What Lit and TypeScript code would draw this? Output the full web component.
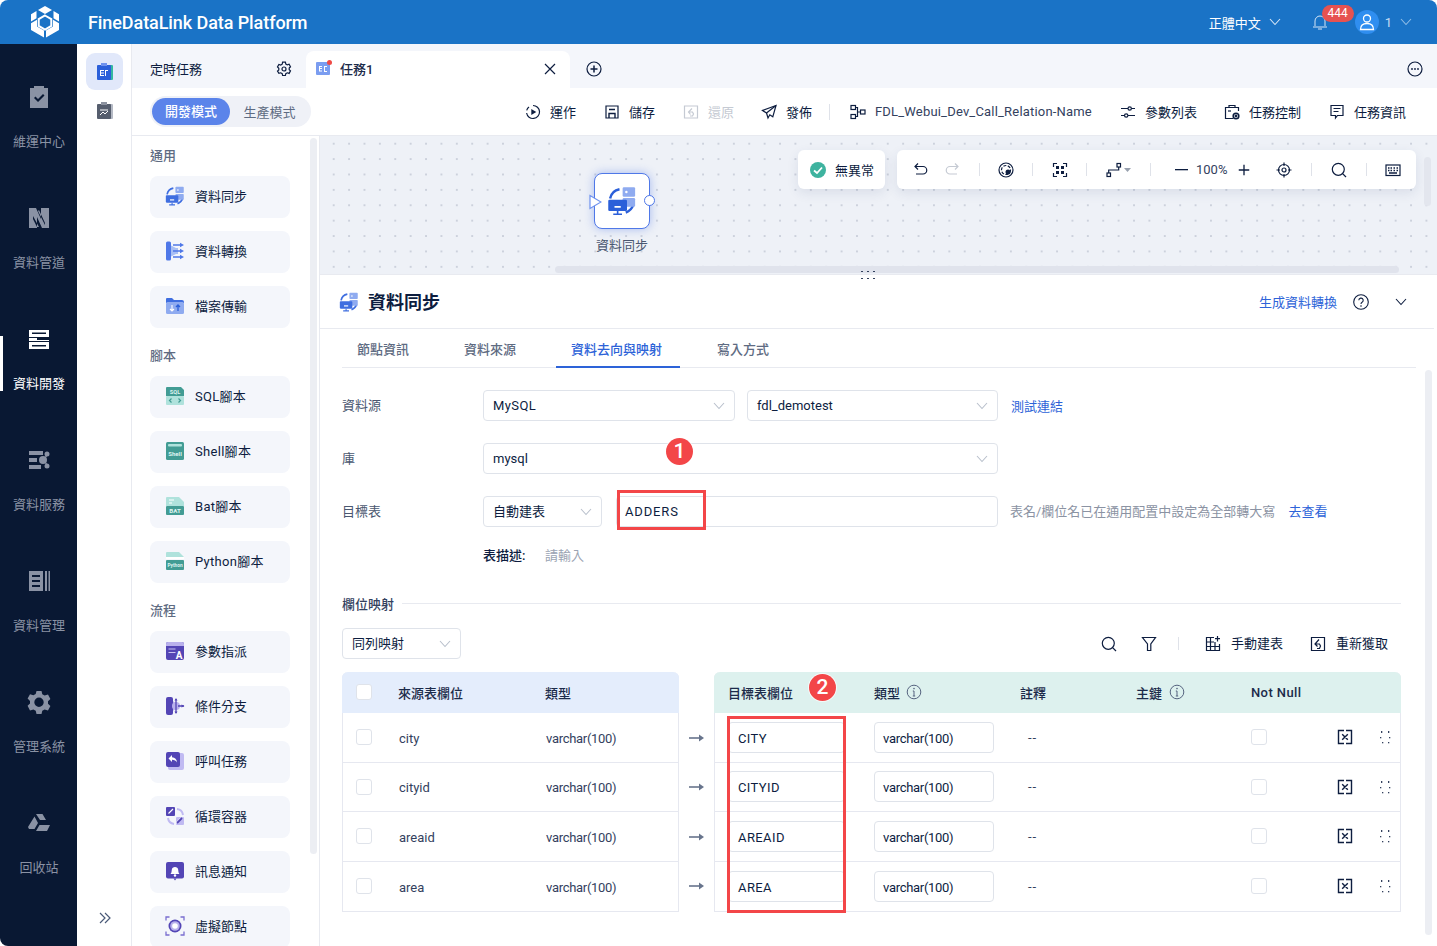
import { LitElement, html, css, svg } from 'lit';
import { customElement } from 'lit/decorators.js';

const ink = '#0d1d3f';

// small line icon wrapper, 16 box by default
const line = (body: unknown, size = 16, color = ink, sw = 1.2) => html`<svg
  width=${size} height=${size} viewBox="0 0 16 16" fill="none" stroke=${color} stroke-width=${sw}>${body}</svg>`;

const chevron = (color = '#b9c0cc') => html`<svg class="chev" width="12" height="8" viewBox="0 0 12 8" fill="none" stroke=${color} stroke-width="1.1"><path d="M1 1l5 5.5L11 1"/></svg>`;

const syncIcon = (size = 24, dark = '#2b5fd9', light = '#8fabf0') => html`<svg width=${size} height=${size} viewBox="0 0 24 24" fill="none">
  <path d="M2.5 10A9.5 9.5 0 0 1 10 2.6" stroke=${dark} stroke-width="2"/>
  <path d="M21 15a9.5 9.5 0 0 1-6 6.2" stroke=${dark} stroke-width="2"/>
  <rect x="12.5" y="1" width="10" height="7.5" rx="1" fill=${light}/>
  <rect x="12.5" y="9.5" width="10" height="7" rx="1" fill=${light}/>
  <circle cx="15.5" cy="4.8" r="1" fill="#fff"/>
  <rect x="1" y="11" width="15" height="9" rx="1" fill=${dark}/>
  <rect x="6" y="16" width="5" height="1.4" fill="#fff"/>
  <path d="M8.5 20v2.2M5 22.6h7" stroke=${dark} stroke-width="1.3"/>
</svg>`;

const transformIcon = html`<svg width="20" height="20" viewBox="0 0 20 20" fill="none">
  <path d="M6 4.500l5 2.500h2v6h-2l-5 2.500z" fill="#a9bff4"/>
  <rect x="1" y="0.500" width="5" height="19" rx="1.500" fill="#4f78e8"/>
  <path d="M8 4h8M8 10h8M8 16h8" stroke="#4f78e8" stroke-width="1.500"/>
  <path d="M15 1.800l4 2.200-4 2.200zM15 7.800l4 2.200-4 2.200zM15 13.800l4 2.200-4 2.200z" fill="#4f78e8"/>
</svg>`;

const folderIcon = html`<svg width="20" height="20" viewBox="0 0 20 20" fill="none">
  <path d="M1 3a1 1 0 0 1 1-1h5l2 2h8a2 2 0 0 1 2 2v1H1z" fill="#3f6ee0"/>
  <rect x="1" y="6" width="18" height="12" rx="1.500" fill="#8fabf0"/>
  <path d="M7 9v6M5 13l2 2 2-2" stroke="#fff" stroke-width="1.100"/>
  <path d="M13 15V9M11 11l2-2 2 2" stroke="#2b5fd9" stroke-width="1.300"/>
</svg>`;

const scriptIcon = (kind: string) => html`<svg width="20" height="20" viewBox="0 0 20 20" fill="none" font-family="Roboto,sans-serif" font-weight="700">
  ${kind === 'sql' ? svg`<path d="M1 2a1 1 0 0 1 1-1h14l3 3v6H1z" fill="#429c94"/><rect x="1" y="10" width="18" height="9" rx="1" fill="#afe2dc"/>
    <text x="10" y="8" font-size="5.600" fill="#dff4f1" text-anchor="middle">SQL</text>
    <path d="M6.500 12.500l-2 2 2 2M13.500 12.500l2 2-2 2" stroke="#429c94" stroke-width="1.200"/>` : ''}
  ${kind === 'shell' ? svg`<rect x="1" y="1" width="18" height="18" rx="1.500" fill="#429c94"/><rect x="3" y="3" width="14" height="2.500" rx="1" fill="#afe2dc"/>
    <text x="10" y="14.500" font-size="6" fill="#dff4f1" text-anchor="middle">Shell</text>` : ''}
  ${kind === 'bat' ? svg`<path d="M1 2a1 1 0 0 1 1-1h12l5 5v4H1z" fill="#afe2dc"/><path d="M4 4h5M4 7h3" stroke="#fff" stroke-width="1.200"/><rect x="1" y="10" width="18" height="9" rx="1" fill="#429c94"/>
    <text x="10" y="17" font-size="6.200" fill="#dff4f1" text-anchor="middle">BAT</text>` : ''}
  ${kind === 'python' ? svg`<path d="M1 2a1 1 0 0 1 1-1h12l5 5v2H1z" fill="#afe2dc"/><rect x="1" y="6" width="18" height="2" fill="#fff"/><rect x="1" y="9" width="18" height="10" rx="1" fill="#429c94"/>
    <text x="10" y="16" font-size="4.800" fill="#dff4f1" text-anchor="middle">Python</text>` : ''}
</svg>`;

const flowIcon = (kind: string) => html`<svg width="20" height="20" viewBox="0 0 20 20" fill="none">
  ${kind === 'param' ? svg`<rect x="1" y="1" width="18" height="18" rx="2" fill="#5345b5"/><path d="M1 3a2 2 0 0 1 2-2h14a2 2 0 0 1 2 2v2H1z" fill="#b9b1ec"/>
    <path d="M3.500 8h7M3.500 11.500h7" stroke="#c9c3f0" stroke-width="1"/><text x="14" y="18" font-size="10" font-weight="700" font-family="Roboto,sans-serif" fill="#fff" text-anchor="middle">A</text>` : ''}
  ${kind === 'branch' ? svg`<rect x="1" y="1" width="7" height="18" rx="2" fill="#5345b5"/><path d="M8 5l5 5-5 5z" fill="#b9b1ec"/><circle cx="11" cy="10" r="4" fill="#b9b1ec"/>
    <path d="M2 10h5M13 10h6M11 3v14" stroke="#5345b5" stroke-width="1.300"/><path d="M9.500 4.500L11 2l1.500 2.500zM9.500 15.500L11 18l1.500-2.500zM16.500 8.500L19.500 10l-3 1.500z" fill="#5345b5"/>` : ''}
  ${kind === 'call' ? svg`<rect x="3" y="2" width="16" height="17" rx="2" fill="#c0baf2"/><rect x="1" y="1" width="14" height="15" rx="2" fill="#5345b5"/>
    <path d="M7 4L3.500 7.500 7 11V8.800c2.500 0 4 .8 5 2.700-.2-3.300-2-5-5-5.300z" fill="#fff"/>` : ''}
  ${kind === 'loop' ? svg`<rect x="1" y="1" width="9" height="9" rx="1" fill="#5345b5"/><rect x="11" y="11" width="8" height="8" rx="1" fill="#c0baf2"/>
    <path d="M12 3a7 7 0 0 1 6 6M3 12a7 7 0 0 0 6 6" stroke="#c0baf2" stroke-width="2"/><path d="M8 3L3.500 7.500M11 17l5-5" stroke="#fff" stroke-width="1.200"/><path d="M12 17l5-5" stroke="#5345b5" stroke-width="1.800"/>` : ''}
  ${kind === 'notify' ? svg`<rect x="1" y="1" width="18" height="16.500" rx="2" fill="#5345b5"/><path d="M8.500 17.500h3L10 19.500z" fill="#5345b5"/>
    <path d="M5.500 13c1.300-1 1-2.500 1.300-4.200C7 7 8.300 6 10 6s3 1 3.200 2.800c.3 1.700 0 3.200 1.300 4.200z" fill="#fff"/><circle cx="10" cy="14.500" r="1.200" fill="#fff"/>` : ''}
  ${kind === 'virtual' ? svg`<circle cx="10" cy="10" r="6.500" fill="#5345b5"/><circle cx="10" cy="10" r="4.800" fill="#b9b1ec"/><circle cx="10" cy="10" r="2.800" fill="#fff"/>
    <path d="M1 4.500V1h3.500M15.500 1H19v3.500M19 15.500V19h-3.500M4.500 19H1v-3.500" stroke="#7a6ed0" stroke-width="1.300"/>` : ''}
</svg>`;

const railIcon = (i: number, c: string) => html`<svg width="24" height="24" viewBox="0 0 24 24" fill=${c}>
  ${[
    svg`<path fill-rule="evenodd" d="M3 4h4V2h10v2h4v20H3zM7 14l1.500-1.500L11 15l5-5 1.500 1.500L11 18z" transform="translate(0 -1)"/>`,
    svg`<path fill-rule="evenodd" d="M2 2h7l5 11V2h8v20h-7L10 11v11H2zM11 5l7 14v-2l-6-13zM6 10l6 11h-2L6 13z"/>`,
    svg`<path d="M2 3h20v7H2zM2 11h8v2h12v1H2zM2 15h20v7H2z"/><rect x="5" y="5.500" width="14" height="1.500" fill="#091833"/><rect x="5" y="18" width="14" height="1.500" fill="#091833"/>`,
    svg`<path d="M2 3h14v4H2zM2 10h8v4H2zM2 17h12v4H2z"/><circle cx="16" cy="12" r="4"/><circle cx="20" cy="6" r="2.500"/><circle cx="20" cy="18" r="2.500"/><path d="M16 12l4-6 1 1-4 5 4 5-1 1z"/>`,
    svg`<path fill-rule="evenodd" d="M2 2h14v20H2zM5 6v2h8V6zM5 11v2h8v-2zM5 16v2h8v-2z"/><rect x="18" y="2" width="2" height="20"/><rect x="21.500" y="2" width="1.500" height="20"/>`,
    svg`<path fill-rule="evenodd" d="M9.500 1h5l.8 3.200 2.300 1.300L21 4.600l2.400 4.300-2.400 2.300v2.600l2.400 2.300-2.400 4.300-3.400-.9-2.300 1.300-.8 3.200h-5l-.8-3.200-2.300-1.300-3.400.9L.6 15.800 3 13.500v-2.600L.6 8.600 3 4.300l3.400.9 2.300-1.300zM12 7.500a4.700 4.700 0 1 0 0 9.400 4.700 4.700 0 0 0 0-9.400z"/>`,
    svg`<path d="M9 3h6.500l3.500 6-6 0zM7.500 5.500L11 12l-3.500 6H2l-1-2zM9 20l3.500-6H23l-3 6z"/>`,
  ][i]}
</svg>`;

const toolIcons: Record<string, unknown> = {
  run: line(svg`<path d="M8 1.500a6.500 6.500 0 1 1-6.400 7.500M1.700 6.300A6.500 6.500 0 0 1 4 3"/><path d="M6.300 5l5 3-5 3z" fill="${ink}" stroke="none"/>`),
  save: line(svg`<path d="M2 2h12v12H2z"/><path d="M5 14V9.500h6V14M5 5.500h6" stroke-width="1.400"/>`),
  revert: line(svg`<path d="M1.500 2h13v12h-13z"/><path d="M9 4.500L5.500 8l2 2.500M5.500 8h4l1 2-1 2H7"/>`, 16, '#c5cad3'),
  publish: line(svg`<path d="M15 1.500L1.500 6.500l4 2.500 1.500 5 1.800-3.200 3 2z"/><path d="M5.500 9L15 1.500"/>`),
  relation: line(svg`<rect x="1" y="1.500" width="4.500" height="4"/><rect x="1" y="10.500" width="4.500" height="4"/><rect x="10.500" y="6" width="4.500" height="4"/><path d="M5.500 3.500h2v9h-2M7.500 8h3"/>`),
  params: line(svg`<path d="M1 4.500h7M11.500 4.500H15M1 11.500h3.500M8 11.500h7"/><circle cx="9.700" cy="4.500" r="1.700"/><circle cx="6.200" cy="11.500" r="1.700"/>`),
  control: line(svg`<path d="M9 14.500H1.500v-11h13V7M5 3.500V1.500h6v2"/><path d="M4 7h3"/><circle cx="12" cy="12" r="2.800" stroke-width="1.600"/><circle cx="12" cy="12" r=".8" fill="${ink}"/>`),
  info: line(svg`<path d="M2 1.500h12v10H8.500L6.500 14v-2.500H2z"/><path d="M4.500 4.500h7M4.500 7.500h5"/>`),
};

const gearIcon = line(svg`<path d="M6.600 1.200h2.800l.4 1.800 1.500.9 1.800-.6 1.400 2.500-1.300 1.200v1.700l1.300 1.200-1.400 2.500-1.800-.6-1.500.9-.4 1.800H6.600l-.4-1.800-1.500-.9-1.800.6L1.500 10.100l1.300-1.200V7.200L1.500 6l1.400-2.500 1.800.6 1.500-.9z"/><circle cx="8" cy="8" r="2"/>`);

type Card = { name: string; icon: unknown };
const groups: { title: string; cards: Card[] }[] = [
  { title: '通用', cards: [
    { name: '資料同步', icon: syncIcon(20, '#3f6ee0') },
    { name: '資料轉換', icon: transformIcon },
    { name: '檔案傳輸', icon: folderIcon },
  ] },
  { title: '腳本', cards: [
    { name: 'SQL腳本', icon: scriptIcon('sql') },
    { name: 'Shell腳本', icon: scriptIcon('shell') },
    { name: 'Bat腳本', icon: scriptIcon('bat') },
    { name: 'Python腳本', icon: scriptIcon('python') },
  ] },
  { title: '流程', cards: [
    { name: '參數指派', icon: flowIcon('param') },
    { name: '條件分支', icon: flowIcon('branch') },
    { name: '呼叫任務', icon: flowIcon('call') },
    { name: '循環容器', icon: flowIcon('loop') },
    { name: '訊息通知', icon: flowIcon('notify') },
    { name: '虛擬節點', icon: flowIcon('virtual') },
  ] },
];

const railItems = ['維運中心', '資料管道', '資料開發', '資料服務', '資料管理', '管理系統', '回收站'];

const tools = [
  { key: 'run', label: '運作' },
  { key: 'save', label: '儲存' },
  { key: 'revert', label: '還原', off: true },
  { key: 'publish', label: '發佈', sep: true },
  { key: 'relation', label: 'FDL_Webui_Dev_Call_Relation-Name' },
  { key: 'params', label: '參數列表' },
  { key: 'control', label: '任務控制' },
  { key: 'info', label: '任務資訊' },
];

const fields = [
  { src: 'city', target: 'CITY' },
  { src: 'cityid', target: 'CITYID' },
  { src: 'areaid', target: 'AREAID' },
  { src: 'area', target: 'AREA' },
];

const infoIcon = line(svg`<circle cx="8" cy="8" r="6.800"/><path d="M8 7v5M6.800 7H8M6.800 12h2.400"/><circle cx="8" cy="4.600" r=".8" fill="#566480" stroke="none"/>`, 16, '#566480', 1);

@customElement('app-root')
export class AppRoot extends LitElement {
  static styles = css`
    :host {
      display: block;
      width: 1437px;
      height: 946px;
      font-family: Roboto, "Noto Sans CJK TC", sans-serif;
      font-size: 13px;
      color: #0d1d3f;
    }
    svg { display: block; flex: none; }
    .app {
      position: relative;
      width: 1437px;
      height: 946px;
      display: flex;
      flex-direction: column;
      overflow: hidden;
      border-radius: 8px;
      background: #fff;
    }

    /* top bar */
    .top {
      height: 44px;
      flex: none;
      display: flex;
      align-items: center;
      background: #1a73c6;
      color: #fff;
      padding: 0 25px 0 28px;
    }
    .title { margin-left: 26px; font-size: 18px; font-weight: 500; letter-spacing: -0.08px; }
    .top-right { margin-left: auto; display: flex; align-items: center; }
    .lang { margin-right: 8px; }
    .bell { position: relative; margin-left: 31px; }
    .badge {
      position: absolute;
      left: 10px;
      top: -9px;
      width: 32px;
      height: 17px;
      border-radius: 9px;
      background: #e65251;
      font-size: 12px;
      line-height: 17px;
      text-align: center;
    }
    .avatar {
      width: 24px;
      height: 24px;
      border-radius: 50%;
      background: #2f8ef0;
      margin-left: 27px;
      display: flex;
      align-items: center;
      justify-content: center;
    }
    .uid { margin: 0 8px 0 6px; color: #c6ddf3; }

    .body { flex: 1; display: flex; min-height: 0; }

    /* dark rail */
    .rail { width: 77px; flex: none; box-sizing: border-box; background: #091833; padding: 15px 0 0 1px; }
    .rail-item {
      position: relative;
      height: 121px;
      box-sizing: border-box;
      padding-top: 26px;
      display: flex;
      flex-direction: column;
      align-items: center;
      gap: 23px;
      color: #8a92a4;
      line-height: 20px;
    }
    .rail-item.on { color: #fff; }
    .rail-item.on::before {
      content: "";
      position: absolute;
      left: -1px;
      top: 35px;
      width: 3px;
      height: 55px;
      background: #fff;
    }

    /* narrow second nav */
    .subnav {
      width: 55px;
      flex: none;
      box-sizing: border-box;
      border-right: 1px solid #e8eaf0;
      padding: 9px 0 0 9px;
      display: flex;
      flex-direction: column;
    }
    .sub-btn {
      width: 37px;
      height: 37px;
      border-radius: 9px;
      display: flex;
      align-items: center;
      justify-content: center;
      margin-bottom: 2px;
    }
    .sub-btn.on { background: #e1e8fa; }
    .expand { margin: auto 0 22px 13px; color: #4a5a78; }

    .main { flex: 1; min-width: 0; display: flex; flex-direction: column; }

    /* tabs */
    .tabs {
      height: 44px;
      flex: none;
      background: #f4f6fb;
      display: flex;
      align-items: flex-end;
    }
    .tab-fixed {
      width: 174px;
      height: 37px;
      box-sizing: border-box;
      padding: 0 14px 2px 18px;
      display: flex;
      align-items: center;
      justify-content: space-between;
    }
    .tab {
      width: 264px;
      height: 37px;
      box-sizing: border-box;
      padding: 0 14px 2px 10px;
      display: flex;
      align-items: center;
      background: #fff;
      border-radius: 8px 8px 0 0;
      font-weight: 500;
      color: #1c2b4a;
    }
    .tab-icon { position: relative; margin-right: 9px; }
    .tab-icon i {
      position: absolute;
      right: -1px;
      top: -1px;
      width: 5px;
      height: 5px;
      border-radius: 50%;
      background: #ef4a45;
    }
    .tab .x { margin-left: auto; }
    .tab-add { height: 37px; padding-bottom: 2px; box-sizing: border-box; display: flex; align-items: center; margin-left: 16px; }
    .tab-more { height: 37px; padding-bottom: 2px; box-sizing: border-box; display: flex; align-items: center; margin-left: auto; margin-right: 14px; }

    /* toolbar */
    .toolbar {
      height: 48px;
      flex: none;
      box-sizing: border-box;
      border-bottom: 1px solid #e8eaf0;
      display: flex;
      align-items: center;
      padding: 0 31px 0 18px;
    }
    .mode {
      width: 161px;
      height: 31px;
      box-sizing: border-box;
      padding: 2px;
      background: #eff1f7;
      border-radius: 16px;
      display: flex;
      align-items: center;
      color: #5e6b82;
    }
    .mode b {
      width: 78px;
      height: 27px;
      border-radius: 14px;
      background: #5b84ea;
      color: #fff;
      font-weight: 500;
      line-height: 27px;
      text-align: center;
    }
    .mode span { flex: 1; text-align: center; }
    .tools { margin-left: auto; display: flex; align-items: center; gap: 27px; }
    .tool { display: flex; align-items: center; gap: 9px; white-space: nowrap; }
    .tool.off { color: #c5cad3; }
    .tool.relation { letter-spacing: 0.19px; color: #33415e; }
    .tool.info, .tool.params, .tool.save, .tool.revert { margin-left: 1px; }
    .tool-sep { width: 1px; height: 16px; background: #dfe2e9; margin: 0 -7px 0 -10px; }

    .content { flex: 1; min-height: 0; display: flex; }

    /* node palette */
    .palette {
      position: relative;
      width: 188px;
      flex: none;
      box-sizing: border-box;
      border-right: 1px solid #e8eaf0;
      padding: 10px 0 0 18px;
      overflow: hidden;
    }
    .group-title { height: 20px; line-height: 20px; color: #5e6b82; font-weight: 500; margin-bottom: 10px; }
    .group { margin-bottom: 18px; }
    .cards { display: flex; flex-direction: column; gap: 13px; }
    .card {
      width: 140px;
      height: 42px;
      box-sizing: border-box;
      padding: 0 0 2px 15px;
      display: flex;
      align-items: center;
      gap: 10px;
      background: #f4f6fb;
      border-radius: 8px;
    }
    .card span { padding-bottom: 2px; }
    .card.latin span { letter-spacing: 0.3px; }
    .pal-scroll {
      position: absolute;
      left: 178px;
      top: 2px;
      width: 7px;
      height: 716px;
      border-radius: 4px;
      background: #eceef3;
    }

    .work { flex: 1; min-width: 0; display: flex; flex-direction: column; }

    /* canvas */
    .canvas {
      position: relative;
      height: 139px;
      flex: none;
      box-sizing: border-box;
      border-bottom: 1px solid #e8eaf0;
      background-color: #eef1f7;
      background-image: radial-gradient(circle, #ccd1dc 1px, transparent 1.300px);
      background-size: 15.400px 15.400px;
      background-position: 6px 0;
    }
    .float {
      position: absolute;
      top: 14px;
      height: 39px;
      background: #fff;
      border-radius: 6px;
      box-shadow: 0 4px 12px rgba(40, 60, 110, 0.1);
      display: flex;
      align-items: center;
    }
    .status { left: 478px; width: 87px; padding-left: 12px; gap: 9px; box-sizing: border-box; }
    .view { left: 577px; width: 519px; padding-left: 16px; box-sizing: border-box; }
    .view .sep { width: 1px; height: 13px; background: #dfe2e9; flex: none; }
    .node {
      position: absolute;
      left: 274px;
      top: 37px;
      width: 56px;
      height: 56px;
      box-sizing: border-box;
      background: #fff;
      border: 1px solid #4f78e8;
      border-radius: 8px;
      box-shadow: 0 0 10px rgba(79, 120, 232, 0.45);
      display: flex;
      align-items: center;
      justify-content: center;
    }
    .port-in { position: absolute; left: -6px; top: 20px; }
    .port-out {
      position: absolute;
      right: -6px;
      top: 21px;
      width: 11px;
      height: 11px;
      box-sizing: border-box;
      border: 1px solid #4f78e8;
      border-radius: 50%;
      background: #fff;
    }
    .node-label { position: absolute; left: 276px; top: 99px; color: #4a5770; }
    .canvas-hbar {
      position: absolute;
      left: 235px;
      top: 130px;
      width: 844px;
      height: 7px;
      border-radius: 4px;
      background: #e0e3ec;
    }
    .canvas-vbar {
      position: absolute;
      left: 1104px;
      top: 21px;
      width: 7px;
      height: 49px;
      border-radius: 4px;
      background: #e3e6ee;
    }
    .grip { position: absolute; left: 540px; top: 135px; z-index: 1; }

    /* node settings */
    .panel { position: relative; flex: 1; min-height: 0; display: flex; flex-direction: column; }
    .panel-head {
      height: 54px;
      flex: none;
      box-sizing: border-box;
      margin-right: 3px;
      border-bottom: 1px solid #e8eaf0;
      padding: 0 27px 0 19px;
      display: flex;
      align-items: center;
    }
    .panel-title { margin-left: 9px; padding-bottom: 2px; font-size: 18px; font-weight: 700; }
    .panel-link { margin-left: auto; color: #2d63d8; }
    .panel-help { margin: 0 26px 0 16px; }
    .steps {
      height: 39px;
      flex: none;
      box-sizing: border-box;
      margin: 0 21px 0 22px;
      border-bottom: 1px solid #e8eaf0;
      display: flex;
      gap: 22px;
      color: #5e6b82;
      font-weight: 500;
    }
    .step { padding: 11px 18px 0 15px; line-height: 20px; height: 39px; box-sizing: border-box; }
    .step.on { color: #2d63d8; border-bottom: 2px solid #2d63d8; }
    .form { padding: 22px 36px 0 22px; }
    .row { display: flex; align-items: center; height: 31px; margin-bottom: 22px; }
    .row > label { width: 141px; flex: none; color: #4a5770; padding-bottom: 2px; }
    .box {
      height: 31px;
      box-sizing: border-box;
      border: 1px solid #dfe3ea;
      border-radius: 4px;
      padding: 0 9px;
      display: flex;
      align-items: center;
      justify-content: space-between;
      background: #fff;
      white-space: nowrap;
    }
    .box .cjk { padding-bottom: 2px; }
    .wide { letter-spacing: 0.4px; }
    .adders { letter-spacing: 0.85px; margin-left: -1px; }
    .link { color: #2d63d8; }
    .hint { color: #8b93a3; padding-bottom: 2px; }
    .desc { display: flex; height: 20px; line-height: 20px; margin: -3px 0 0 141px; }
    .desc b { font-weight: 500; width: 62px; }
    .desc span { color: #9aa3b2; }
    .section { display: flex; align-items: center; height: 20px; margin-top: 27px; color: #33415e; font-weight: 500; }
    .section i { flex: 1; height: 1px; background: #e8eaf0; margin-left: 8px; }
    .map-bar { display: flex; align-items: center; margin-top: 15px; }
    .map-tools { margin-left: auto; margin-right: 13px; display: flex; align-items: center; }
    .map-tools .sep { width: 1px; height: 13px; background: #dfe2e9; margin: 0 26px 0 21px; }
    .map-tool { display: flex; align-items: center; gap: 10px; }
    .map-tool span { padding-bottom: 2px; }

    /* mapping tables */
    .map { display: flex; margin-top: 13px; }
    .tbl {
      box-sizing: border-box;
      border: 1px solid #e6e8f0;
      border-top: 0;
      border-radius: 6px 6px 0 0;
    }
    .tbl.src { width: 337px; }
    .tbl.dst { width: 687px; }
    .arrows { width: 35px; flex: none; padding-top: 41px; }
    .arrow { height: 49.500px; display: flex; align-items: center; justify-content: center; }
    .tr {
      height: 49.500px;
      box-sizing: border-box;
      display: grid;
      align-items: center;
      border-bottom: 1px solid #e6e8f0;
      color: #33415e;
    }
    .tr:last-child { height: 49px; border-bottom: 0; }
    .th { height: 41px; padding-bottom: 1px; border-bottom: 0; font-weight: 500; color: #1c2b4a; border-radius: 6px 6px 0 0; margin: 0 -1px; }
    .src .tr { grid-template-columns: 56px 147px 1fr; padding-left: 0; }
    .dst .tr { grid-template-columns: 159px 146px 116px 115px 86px 42px 1fr; }
    .src .th { background: #e4edfc; }
    .dst .th { background: #ddf1ee; }
    .dst .th { grid-template-columns: 160px 146px 116px 115px 1fr; }
    .src .td { padding-top: 2px; }
    .vc { letter-spacing: -0.3px; }
    .nn-title { letter-spacing: 0.4px; }
    .check {
      width: 16px;
      height: 16px;
      box-sizing: border-box;
      border: 1px solid #dfe3ea;
      border-radius: 3px;
      background: #fff;
      margin-left: 13px;
    }
    .th .check { margin-left: 14px; }
    .first { padding-left: 13px; }
    .th .first { padding-left: 14px; }
    .cell-flex { display: flex; align-items: center; gap: 6px; }
    .th .cell-flex:nth-child(4) { gap: 7px; }
    .dash { padding-left: 8px; letter-spacing: 1px; }
    .check.nn { margin-left: 0; }
    .input { width: 117px; letter-spacing: 0.4px; }
    .input2 { width: 120px; }
    .tr .box { color: #0d1d3f; padding: 2px 8px 0 9px; }
    .tr .box.input2 { padding-left: 8px; }

    .main-scroll {
      position: absolute;
      right: 5px;
      top: 95px;
      width: 7px;
      height: 565px;
      border-radius: 4px;
      background: #eceef3;
    }

    /* review marks over the page */
    .mark { position: absolute; box-sizing: border-box; border: 3px solid #f34648; }
    .num {
      position: absolute;
      width: 27px;
      height: 27px;
      border-radius: 50%;
      background: #f34648;
      color: #fff;
      font-size: 21px;
      font-weight: 500;
      line-height: 27px;
      text-align: center;
      box-shadow: 0 0 0 1px rgba(255, 255, 255, 0.7);
    }
  `;

  render() {
    return html`
      <div class="app">
        ${this.renderTop()}
        <div class="body">
          <nav class="rail">
            ${railItems.map((name, i) => html`
              <div class="rail-item ${i === 2 ? 'on' : ''}">
                ${railIcon(i, i === 2 ? '#fff' : '#8a92a4')}
                <span>${name}</span>
              </div>`)}
          </nav>
          <div class="subnav">
            <div class="sub-btn on">
              <svg width="16" height="18" viewBox="0 0 16 18"><rect x="2" y="2" width="14" height="15" rx="1" fill="#33b8a0"/><rect y="2" width="14" height="15" rx="1" fill="#2b5fd9"/><rect x="4" y="0" width="6" height="3" fill="#6f92ee"/><path d="M3 7h4v1H4v1.500h3v1H4V12h3v1H3zM8 7h3v1H9v5h2v-1 1H8z" fill="#fff"/></svg>
            </div>
            <div class="sub-btn">
              <svg width="16" height="18" viewBox="0 0 16 18"><rect x="2" y="2" width="14" height="15" rx="1" fill="#b4b9c4"/><rect y="2" width="14" height="15" rx="1" fill="#565e6e"/><rect x="4" y="0" width="6" height="3" fill="#8d93a0"/><path d="M3 8h8M3 13l3-3 2 2 3-3" stroke="#fff" fill="none"/></svg>
            </div>
            <div class="expand">
              <svg width="12" height="12" viewBox="0 0 12 12" fill="none" stroke="#4a5a78" stroke-width="1.200"><path d="M1 1l5 5-5 5M6 1l5 5-5 5"/></svg>
            </div>
          </div>
          <div class="main">
            ${this.renderTabs()}
            ${this.renderToolbar()}
            <div class="content">
              ${this.renderPalette()}
              <div class="work">
                ${this.renderCanvas()}
                ${this.renderPanel()}
              </div>
            </div>
          </div>
        </div>
        <div class="mark" style="left:617px;top:490px;width:89px;height:40px"></div>
        <div class="mark" style="left:727px;top:716px;width:119px;height:197px"></div>
        <div class="num" style="left:666px;top:438px">1</div>
        <div class="num" style="left:809px;top:674px">2</div>
      </div>
    `;
  }

  renderTop() {
    return html`
      <header class="top">
        <svg width="34" height="34" viewBox="0 0 34 34" fill="#fff">
          <path d="M17 1l7 4-7 4-7-4z"/>
          <path d="M25.500 6l5.500 3.200v7.300l-5.500-3.200z"/>
          <path d="M8.500 6L3 9.200v7.300l5.500-3.200z"/>
          <path d="M3 18.200l6-3.400v6.800l7 4v6.900L3 25z"/>
          <path d="M31 18.200l-6-3.400v6.800l-7 4v6.900L31 25z"/>
          <path d="M17 10.500l6.300 3.600v6.800L17 24.500l-6.300-3.600v-6.800z" fill="none" stroke="#fff" stroke-width="2"/>
        </svg>
        <span class="title">FineDataLink Data Platform</span>
        <div class="top-right">
          <span class="lang">正體中文</span>
          ${chevron('#d6e6f6')}
          <span class="bell">
            ${line(svg`<path d="M3 12V7a5 5 0 0 1 10 0v5M1 13h14"/><path d="M6 15h4"/>`, 16, '#d6e6f6', 1)}
            <span class="badge">444</span>
          </span>
          <span class="avatar">
            <svg width="16" height="18" viewBox="0 0 16 18" fill="none" stroke="#fff" stroke-width="1.300"><circle cx="8" cy="5.500" r="3.500"/><path d="M1.500 16.500c0-4 2.500-6 6.500-6s6.500 2 6.500 6z"/></svg>
          </span>
          <span class="uid">1</span>
          ${chevron('#8fbce6')}
        </div>
      </header>
    `;
  }

  renderTabs() {
    return html`
      <div class="tabs">
        <div class="tab-fixed"><span>定時任務</span>${gearIcon}</div>
        <div class="tab">
          <span class="tab-icon">
            <svg width="15" height="15" viewBox="0 0 15 15"><rect y="1" width="14" height="13" rx="1" fill="#7b9df0"/><path d="M3 5h3v1H4v1h2v1H4v1.500h2v1H3zM8 5h3v1H9v4h2v1H8z" fill="#fff"/></svg>
            <i></i>
          </span>
          任務1
          <svg class="x" width="12" height="12" viewBox="0 0 12 12" fill="none" stroke="#0d1d3f" stroke-width="1.200"><path d="M1 1l10 10M11 1L1 11"/></svg>
        </div>
        <div class="tab-add">${line(svg`<circle cx="8" cy="8" r="7"/><path d="M8 4.500v7M4.500 8h7" stroke-width="1.500"/>`)}</div>
        <div class="tab-more">${line(svg`<circle cx="8" cy="8" r="7"/><circle cx="5" cy="8" r=".9" fill="${ink}" stroke="none"/><circle cx="8" cy="8" r=".9" fill="${ink}" stroke="none"/><circle cx="11" cy="8" r=".9" fill="${ink}" stroke="none"/>`)}</div>
      </div>
    `;
  }

  renderToolbar() {
    return html`
      <div class="toolbar">
        <div class="mode"><b>開發模式</b><span>生產模式</span></div>
        <div class="tools">
          ${tools.map((t) => html`
            <div class="tool ${t.off ? 'off' : ''} ${t.key}">${toolIcons[t.key]}<span>${t.label}</span></div>
            ${t.sep ? html`<div class="tool-sep"></div>` : ''}`)}
        </div>
      </div>
    `;
  }

  renderPalette() {
    return html`
      <aside class="palette">
        ${groups.map((g, gi) => html`
          <div class="group">
            <div class="group-title">${g.title}</div>
            <div class="cards">
              ${g.cards.map((c) => html`<div class="card ${gi === 1 ? 'latin' : ''}">${c.icon}<span>${c.name}</span></div>`)}
            </div>
          </div>`)}
        <div class="pal-scroll"></div>
      </aside>
    `;
  }

  renderCanvas() {
    return html`
      <section class="canvas">
        <div class="float status">
          <svg width="16" height="16" viewBox="0 0 16 16"><circle cx="8" cy="8" r="8" fill="#3eb39f"/><path d="M4 8.500l3 2.500 5-5.500" fill="none" stroke="#fff" stroke-width="1.800"/></svg>
          <span>無異常</span>
        </div>
        <div class="float view">
          ${line(svg`<path d="M5 1.500L2 4.500l3 3M2 4.500h8a3.700 3.700 0 0 1 0 7.500H3"/>`)}
          <span style="width:15px"></span>
          ${line(svg`<path d="M11 1.500l3 3-3 3M14 4.500H6a3.700 3.700 0 0 0 0 7.500h7"/>`, 16, '#c5cad3')}
          <span style="width:19px"></span><span class="sep"></span><span style="width:18px"></span>
          ${line(svg`<circle cx="8" cy="8" r="7"/><circle cx="8" cy="8" r="4.500" stroke-dasharray="3 1.500"/><circle cx="10" cy="10" r="2.500" fill="${ink}" stroke="none"/>`)}
          <span style="width:18px"></span><span class="sep"></span><span style="width:19px"></span>
          ${line(svg`<path d="M1.500 5V1.500H5M11 1.500h3.500V5M14.500 11v3.500H11M5 14.500H1.500V11"/><rect x="4" y="4" width="3" height="3" fill="${ink}" stroke="none"/><rect x="9" y="4" width="3" height="3" fill="${ink}" stroke="none"/><rect x="4" y="9" width="3" height="3" fill="${ink}" stroke="none"/><rect x="9" y="9" width="3" height="3" fill="${ink}" stroke="none"/>`)}
          <span style="width:18px"></span><span class="sep"></span><span style="width:19px"></span>
          ${line(svg`<rect x="1" y="11" width="3.500" height="3.500"/><rect x="11" y="1.500" width="3.500" height="3.500"/><path d="M2.700 11V8h10V5"/>`)}
          <svg style="margin:0 0 0 2px" width="7" height="4" viewBox="0 0 7 4"><path d="M0 0h7L3.500 4z" fill="#98a0ae"/></svg>
          <span style="width:19px"></span><span class="sep"></span><span style="width:24px"></span>
          <svg width="14" height="2" viewBox="0 0 14 2"><rect width="13" height="1.300" fill="${ink}"/></svg>
          <span style="margin:0 10px 0 7px;color:#33415e">100%</span>
          ${line(svg`<path d="M8 2v12M2 8h12" stroke-width="1.500"/>`, 14)}
          <span style="width:25px"></span>
          ${line(svg`<circle cx="8" cy="8" r="5.500"/><circle cx="8" cy="8" r="2"/><path d="M8 .5V4M8 12v3.500M.5 8H4M12 8h3.500"/>`)}
          <span style="width:19px"></span><span class="sep"></span><span style="width:19px"></span>
          ${line(svg`<circle cx="7.300" cy="7.300" r="6"/><path d="M11.600 11.600l3.400 3.400"/>`)}
          <span style="width:19px"></span><span class="sep"></span><span style="width:18px"></span>
          ${line(svg`<rect x="1" y="3" width="14" height="10.500"/><path d="M3 6h1.500M5.500 6H7M8.500 6H10M11.500 6H13M3 8.500h1.500M5.500 8.500H7M8.500 8.500H10M11.500 8.500H13M4 11h8" stroke-width="1.300"/>`)}
        </div>
        <div class="node">
          ${syncIcon(30)}
          <svg class="port-in" width="13" height="16" viewBox="0 0 13 16"><path d="M1 1.500l11 6.500-11 6.500z" fill="#fff" stroke="#6f92ee" stroke-width="1.200"/></svg>
          <span class="port-out"></span>
        </div>
        <div class="node-label">資料同步</div>
        <div class="canvas-vbar"></div>
        <div class="canvas-hbar"></div>
        <svg class="grip" width="16" height="10" viewBox="0 0 16 10" fill="#33415e"><rect x="1" y="0" width="2" height="1"/><rect x="7" y="0" width="2" height="1"/><rect x="13" y="0" width="2" height="1"/><rect x="1" y="7" width="2" height="1"/><rect x="7" y="7" width="2" height="1"/><rect x="13" y="7" width="2" height="1"/></svg>
      </section>
    `;
  }

  renderPanel() {
    return html`
      <section class="panel">
        <div class="panel-head">
          ${syncIcon(20, '#3f6ee0')}
          <span class="panel-title">資料同步</span>
          <span class="panel-link">生成資料轉換</span>
          <span class="panel-help">${line(svg`<circle cx="8" cy="8" r="7.300"/><path d="M5.800 6.300a2.200 2.200 0 1 1 3.300 1.900c-.8.500-1.100.9-1.100 1.800"/><circle cx="8" cy="12" r=".8" fill="${ink}" stroke="none"/>`, 16, ink, 1.100)}</span>
          ${chevron(ink)}
        </div>
        <div class="steps">
          <div class="step">節點資訊</div>
          <div class="step">資料來源</div>
          <div class="step on">資料去向與映射</div>
          <div class="step">寫入方式</div>
        </div>
        <div class="form">
          <div class="row">
            <label>資料源</label>
            <div class="box" style="width:252px"><span class="wide">MySQL</span>${chevron()}</div>
            <div class="box" style="width:251px;margin-left:12px"><span>fdl_demotest</span>${chevron()}</div>
            <span class="link" style="margin-left:13px">測試連結</span>
          </div>
          <div class="row">
            <label>庫</label>
            <div class="box" style="width:515px"><span>mysql</span>${chevron()}</div>
          </div>
          <div class="row">
            <label>目標表</label>
            <div class="box" style="width:119px"><span class="cjk">自動建表</span>${chevron()}</div>
            <div class="box" style="width:382px;margin-left:14px"><span class="adders">ADDERS</span></div>
            <span class="hint" style="margin-left:12px">表名/欄位名已在通用配置中設定為全部轉大寫</span>
            <span class="link" style="margin-left:13px;padding-bottom:2px">去查看</span>
          </div>
          <div class="desc"><b>表描述:</b><span>請輸入</span></div>
          <div class="section">欄位映射<i></i></div>
          <div class="map-bar">
            <div class="box" style="width:119px"><span class="cjk">同列映射</span>${chevron()}</div>
            <div class="map-tools">
              ${line(svg`<circle cx="7.300" cy="7.300" r="6"/><path d="M11.600 11.600l3.400 3.400"/>`)}
              <span style="width:24px"></span>
              ${line(svg`<path d="M1.500 1.500h13L9.800 8v6.500H6.500V8z"/>`)}
              <span class="sep"></span>
              <span class="map-tool">${line(svg`<path d="M9 1.500H1.500v13h13V8M1.500 6h7.500M1.500 10.500h13M5.500 1.500v13M10 6v8.500"/><path d="M12.500 0v5.500M10 2.700h5"/>`)}<span>手動建表</span></span>
              <span style="width:27px"></span>
              <span class="map-tool">${line(svg`<path d="M1.500 1.500h13v13h-13z"/><path d="M9 3.500L5 8l2.500 2.500M5 8h4.500l1 2-1 2.500H7"/>`)}<span>重新獲取</span></span>
            </div>
          </div>
          <div class="map">
            <div class="tbl src">
              <div class="tr th"><span class="check"></span><span>來源表欄位</span><span>類型</span></div>
              ${fields.map((f) => html`
                <div class="tr"><span class="check"></span><span class="td">${f.src}</span><span class="td vc">varchar(100)</span></div>`)}
            </div>
            <div class="arrows">
              ${fields.map(() => html`<div class="arrow">
                <svg width="15" height="10" viewBox="0 0 15 10" fill="#67748c"><path d="M0 4.200h11v1.600H0z"/><path d="M10 1.500L15 5l-5 3.500z"/></svg>
              </div>`)}
            </div>
            <div class="tbl dst">
              <div class="tr th">
                <span class="first">目標表欄位</span>
                <span class="cell-flex">類型 ${infoIcon}</span>
                <span>註釋</span>
                <span class="cell-flex">主鍵 ${infoIcon}</span>
                <span class="nn-title">Not Null</span>
              </div>
              ${fields.map((f) => html`
                <div class="tr">
                  <span class="first"><span class="box input">${f.target}</span></span>
                  <span class="box input2"><span class="vc">varchar(100)</span></span>
                  <span class="dash">--</span>
                  <span></span>
                  <span class="check nn"></span>
                  <span>${line(svg`<path d="M7 1.500H1.500v13H7M9 1.500h5.500v13H9M5.200 5.200l5.600 5.600M10.800 5.200l-5.600 5.600" stroke-width="1.400"/>`)}</span>
                  <svg width="12" height="14" viewBox="0 0 12 14" fill="#33415e"><rect x="2" y="1" width="1.300" height="2"/><rect x="9" y="1" width="1.300" height="2"/><rect x="1" y="7" width="1.300" height="1.300"/><rect x="10" y="7" width="1.300" height="1.300"/><rect x="3" y="12" width="1.300" height="1.300"/><rect x="9" y="12" width="1.300" height="1.300"/></svg>
                </div>`)}
            </div>
          </div>
        </div>
        <div class="main-scroll"></div>
      </section>
    `;
  }
}
